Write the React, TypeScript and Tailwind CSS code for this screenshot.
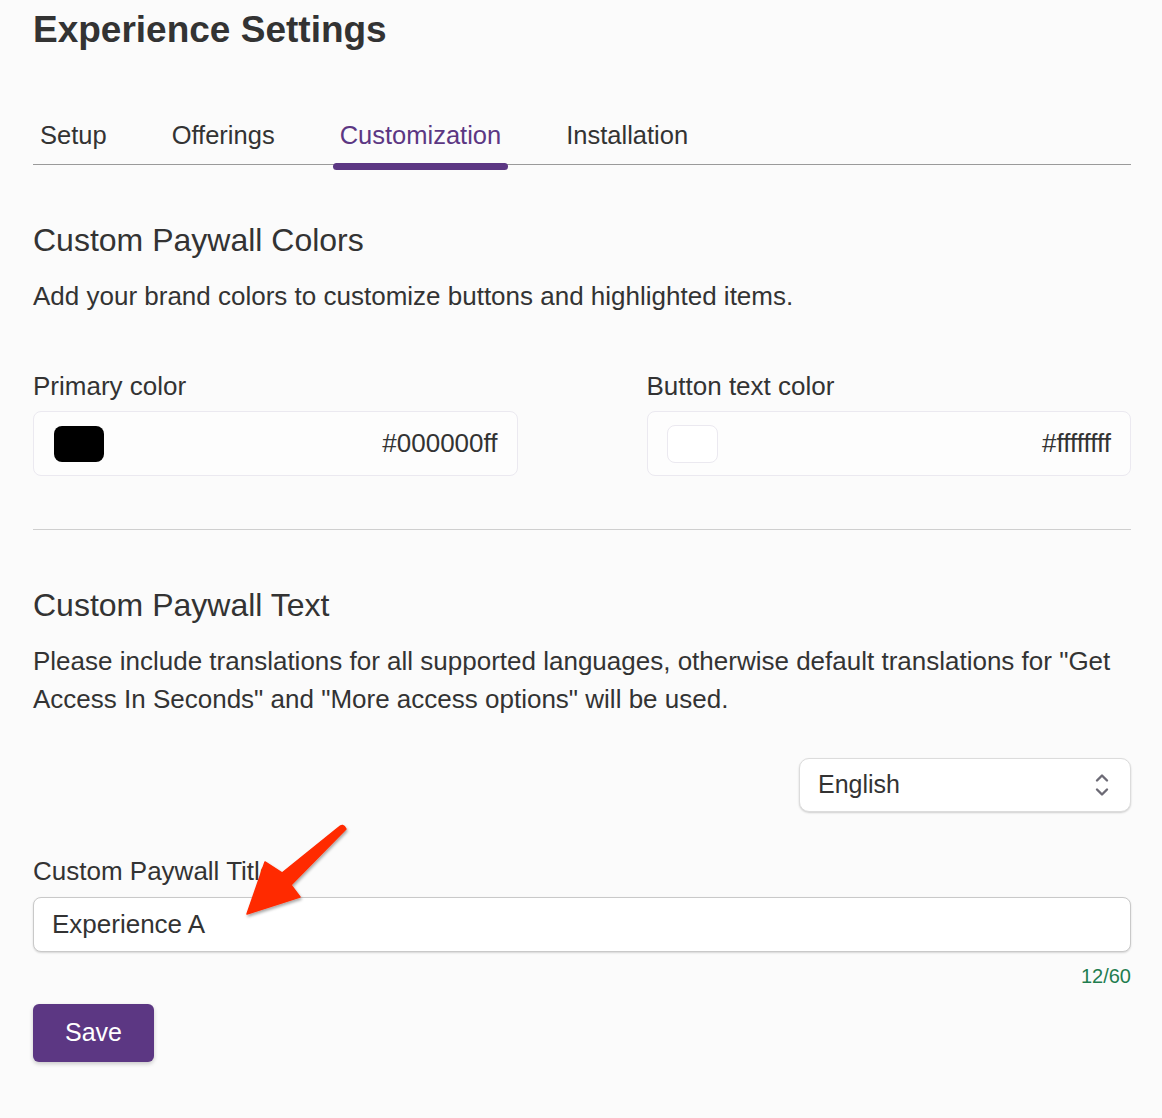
import React from "react";

function Chevrons() {
  return (
    <svg width="16" height="26" viewBox="0 0 16 26" fill="none" stroke="#6c6a75" strokeWidth="2.4" strokeLinecap="round" strokeLinejoin="round">
      <path d="M3 8.5 L8 3.5 L13 8.5" />
      <path d="M3 17.5 L8 22.5 L13 17.5" />
    </svg>
  );
}

function Arrow() {
  return (
    <svg className="absolute left-0 top-0 pointer-events-none" width="1162" height="1118" viewBox="0 0 1162 1118">
      <defs>
        <filter id="sh" x="-20%" y="-20%" width="140%" height="140%">
          <feDropShadow dx="1" dy="2" stdDeviation="1.5" floodColor="#000" floodOpacity="0.35" />
        </filter>
      </defs>
      <path
        d="M339 827 Q343 823 346 829 L291 885 L300 897 L247 914 L265 862 L282 873 Z"
        fill="#ff2a00"
        stroke="#ff2a00"
        strokeWidth="1.5"
        strokeLinejoin="round"
        filter="url(#sh)"
      />
    </svg>
  );
}

export default function App() {
  const tabs = ["Setup", "Offerings", "Customization", "Installation"];
  return (
    <div className="relative min-h-[1118px] w-[1162px] bg-[#fbfbfb] text-[#333333]" style={{ fontFamily: '"Liberation Sans", Arial, sans-serif' }}>
      <div className="px-[33px] pr-[31px] pt-[8px]">
        <h1 className="text-[37px] leading-[44px] font-bold text-[#333333]">Experience Settings</h1>

        <div className="mt-[68px] flex gap-[51px] border-b border-[#9a9a9a]">
          {tabs.map((t) => (
            <div key={t} className="relative px-[7px] pb-[13px]">
              <span className={"text-[25.5px] leading-[30px] " + (t === "Customization" ? "text-[#5c3783]" : "text-[#333333]")}>{t}</span>
              {t === "Customization" && (
                <div className="absolute left-0 right-0 bottom-[-6px] h-[7px] rounded-[4px] bg-[#5c3783]" />
              )}
            </div>
          ))}
        </div>

        <h2 className="mt-[57px] text-[32px] leading-[36px]">Custom Paywall Colors</h2>
        <p className="mt-[23px] text-[26px] leading-[30px]">Add your brand colors to customize buttons and highlighted items.</p>

        <div className="mt-[60px] grid grid-cols-2 gap-[129px]">
          <div>
            <div className="text-[26px] leading-[30px]">Primary color</div>
            <div className="mt-[10px] flex h-[65px] items-center justify-between rounded-[8px] border border-[#ebe9f0] bg-[#fdfdfd] pl-[20px] pr-[19px]">
              <div className="h-[36px] w-[50px] rounded-[8px] bg-black" />
              <span className="text-[26px]">#000000ff</span>
            </div>
          </div>
          <div>
            <div className="text-[26px] leading-[30px]">Button text color</div>
            <div className="mt-[10px] flex h-[65px] items-center justify-between rounded-[8px] border border-[#ebe9f0] bg-[#fdfdfd] pl-[19px] pr-[19px]">
              <div className="h-[38px] w-[51px] rounded-[8px] border border-[#ebe9f0] bg-white" />
              <span className="text-[26px]">#ffffffff</span>
            </div>
          </div>
        </div>

        <div className="mt-[53px] h-px bg-[#cfcfcf]" />

        <h2 className="mt-[57px] text-[32px] leading-[36px]">Custom Paywall Text</h2>
        <p className="mt-[19px] text-[26px] leading-[38px]">
          Please include translations for all supported languages, otherwise default translations for "Get
          <br />
          Access In Seconds" and "More access options" will be used.
        </p>

        <div className="mt-[40px] flex justify-end">
          <div className="flex h-[54px] w-[332px] items-center justify-between rounded-[10px] border border-[#dcdcdc] bg-white pl-[18px] pr-[20px] shadow-[0_1px_2px_rgba(0,0,0,0.18)]">
            <span className="text-[25px]">English</span>
            <Chevrons />
          </div>
        </div>

        <div className="mt-[44px] text-[26px] leading-[30px]">Custom Paywall Title</div>
        <div className="mt-[11px] flex h-[55px] items-center rounded-[8px] border border-[#c9c9c9] bg-white pl-[18px] shadow-[0_1px_2px_rgba(0,0,0,0.15)]">
          <span className="text-[26px]">Experience A</span>
        </div>
        <div className="mt-[14px] text-right text-[20px] leading-[20px] text-[#1f7d4f]">12/60</div>

        <button className="mt-[18px] h-[58px] w-[121px] rounded-[6px] bg-[#5c3783] text-[25px] text-white shadow-[0_2px_4px_rgba(0,0,0,0.2)]">Save</button>
      </div>
      <Arrow />
    </div>
  );
}
